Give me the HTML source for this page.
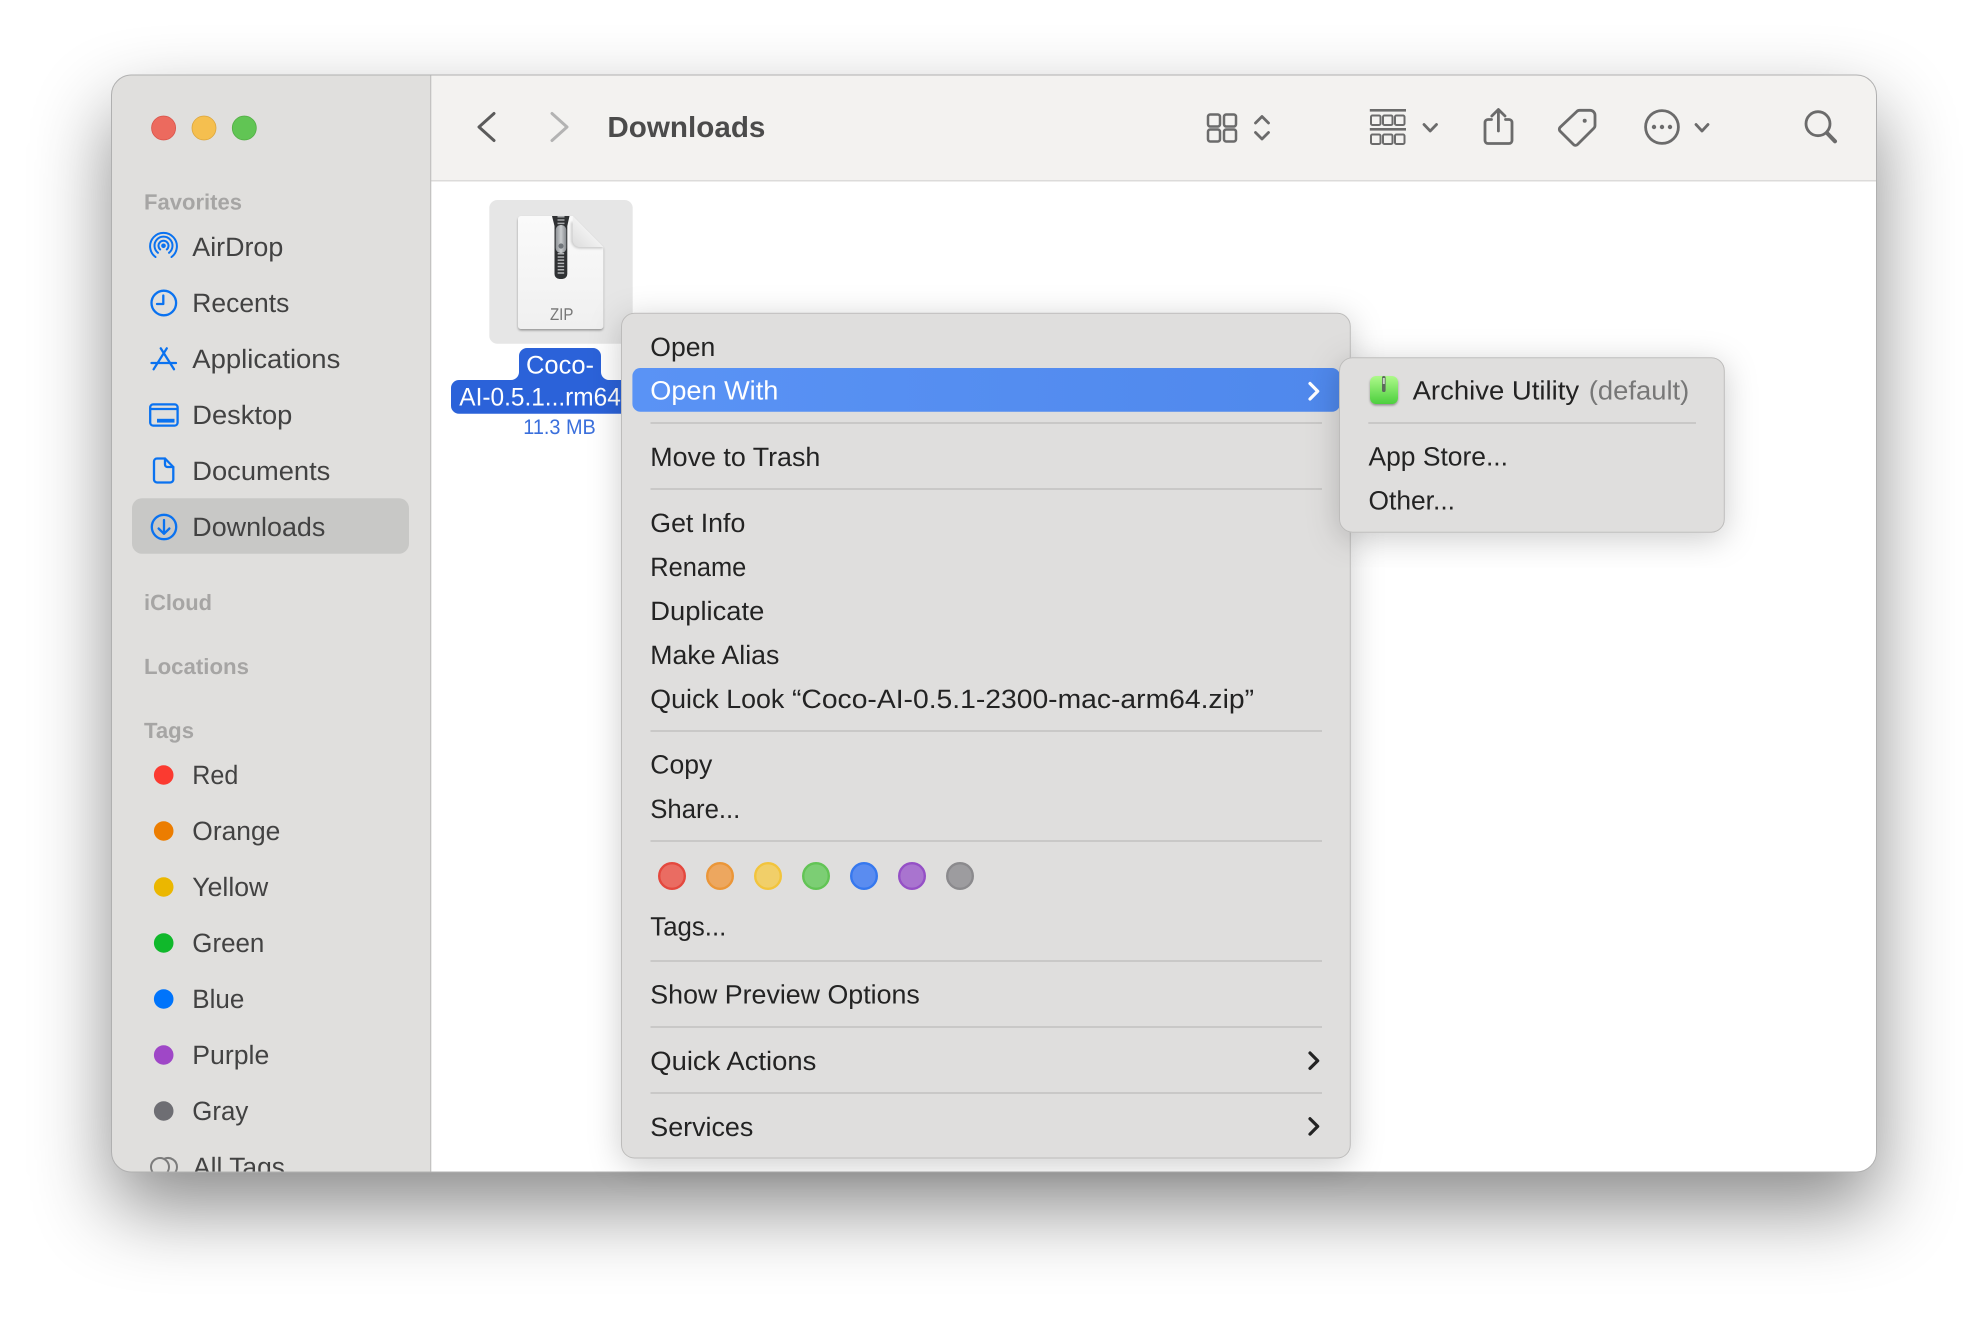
<!DOCTYPE html>
<html><head><meta charset="utf-8"><title>Downloads</title>
<style>
html,body{margin:0;padding:0;background:#fff;width:1988px;height:1320px;overflow:hidden}
#sh{position:absolute;left:111.5px;top:75px;width:1765px;height:1097px;border-radius:20px;box-shadow:0 36px 78px 0 rgba(0,0,0,.46)}
svg{position:absolute;left:0;top:0}
text{font-family:"Liberation Sans",sans-serif;text-rendering:geometricPrecision}
.s{font-size:26.5px;fill:#424242}
.h{font-size:22px;font-weight:700;fill:#a6a5a4}
.m{font-size:26.5px;fill:#232323}
.ic{fill:none;stroke:#0a72f0;stroke-width:2.6;stroke-linecap:round;stroke-linejoin:round}
.tb{fill:none;stroke:#6b6b6b;stroke-width:2.8;stroke-linecap:round;stroke-linejoin:round}
.ch{fill:none;stroke:#232323;stroke-width:3.2;stroke-linecap:round;stroke-linejoin:round}
.sep{fill:#c9c8c7}
</style></head>
<body>
<div id="sh"></div>
<svg width="1988" height="1320" viewBox="0 0 1988 1320" xmlns="http://www.w3.org/2000/svg">
<defs>
<clipPath id="win"><rect x="111.5" y="75" width="1765" height="1097" rx="20"/></clipPath>
<clipPath id="docc"><path d="M521 216H572.7L603.3 247V326a3 3 0 0 1-3 3H521a3 3 0 0 1-3-3V219a3 3 0 0 1 3-3z"/></clipPath>
<linearGradient id="doc" x1="0" y1="0" x2="0" y2="1"><stop offset="0" stop-color="#fafafa"/><stop offset="1" stop-color="#f0f0f0"/></linearGradient>
<linearGradient id="fold" x1="0" y1="1" x2="1" y2="0"><stop offset="0" stop-color="#dcdcdc"/><stop offset=".6" stop-color="#f5f5f5"/><stop offset="1" stop-color="#fbfbfb"/></linearGradient>
<linearGradient id="pull" x1="0" y1="0" x2="1" y2="0"><stop offset="0" stop-color="#8f9397"/><stop offset=".5" stop-color="#c9ccce"/><stop offset="1" stop-color="#85898d"/></linearGradient>
<linearGradient id="sel" x1="0" y1="0" x2="1" y2="0"><stop offset="0" stop-color="#5a93f5"/><stop offset="1" stop-color="#4f88ec"/></linearGradient>
<linearGradient id="au" x1="0" y1="0" x2="0" y2="1"><stop offset="0" stop-color="#aef98a"/><stop offset="1" stop-color="#4ccf3e"/></linearGradient>
<filter id="ms" x="-20%" y="-20%" width="140%" height="140%"><feDropShadow dx="0" dy="6" stdDeviation="16" flood-color="#000" flood-opacity=".2"/></filter>
<filter id="ds" x="-20%" y="-20%" width="140%" height="140%"><feDropShadow dx="0" dy="1.5" stdDeviation="1" flood-color="#000" flood-opacity=".35"/></filter>
<filter id="bl" x="-20%" y="-20%" width="140%" height="140%"><feGaussianBlur stdDeviation="1.2"/></filter>
</defs>

<g clip-path="url(#win)">
<rect x="111.5" y="75" width="1765" height="1097" fill="#fff"/>
<rect x="431" y="75" width="1445" height="105" fill="#f3f2f0"/>
<rect x="431" y="180" width="1445" height="1.5" fill="#dcdbda"/>
<rect x="111.5" y="75" width="319.5" height="1097" fill="#e0dfdd"/>
<rect x="430" y="75" width="1.3" height="1097" fill="#c4c3c2"/>

<!-- traffic lights -->
<circle cx="163.6" cy="128" r="12" fill="#ec6a5e" stroke="#d9534a" stroke-width=".8"/>
<circle cx="204" cy="128" r="12" fill="#f5bf4f" stroke="#dca63c" stroke-width=".8"/>
<circle cx="244.3" cy="128" r="12" fill="#61c554" stroke="#52ad44" stroke-width=".8"/>

<!-- sidebar -->
<text x="144" y="209.6" class="h" textLength="98" lengthAdjust="spacingAndGlyphs">Favorites</text>
<rect x="132" y="498.3" width="277" height="55.4" rx="10" fill="#c8c8c6"/>

<text x="192.3" y="256" class="s" textLength="91" lengthAdjust="spacingAndGlyphs">AirDrop</text>
<text x="192.3" y="312" class="s" textLength="97" lengthAdjust="spacingAndGlyphs">Recents</text>
<text x="192.3" y="368" class="s" textLength="148" lengthAdjust="spacingAndGlyphs">Applications</text>
<text x="192.3" y="424" class="s" textLength="100" lengthAdjust="spacingAndGlyphs">Desktop</text>
<text x="192.3" y="480" class="s" textLength="138" lengthAdjust="spacingAndGlyphs">Documents</text>
<text x="192.3" y="536" class="s" textLength="133" lengthAdjust="spacingAndGlyphs">Downloads</text>

<text x="144" y="610" class="h" textLength="68" lengthAdjust="spacingAndGlyphs">iCloud</text>
<text x="144" y="674" class="h" textLength="105" lengthAdjust="spacingAndGlyphs">Locations</text>
<text x="144" y="738" class="h" textLength="50" lengthAdjust="spacingAndGlyphs">Tags</text>

<text x="192.3" y="784" class="s" textLength="46" lengthAdjust="spacingAndGlyphs">Red</text>
<text x="192.3" y="840" class="s" textLength="88" lengthAdjust="spacingAndGlyphs">Orange</text>
<text x="192.3" y="896" class="s" textLength="76" lengthAdjust="spacingAndGlyphs">Yellow</text>
<text x="192.3" y="952" class="s" textLength="72" lengthAdjust="spacingAndGlyphs">Green</text>
<text x="192.3" y="1008" class="s" textLength="52" lengthAdjust="spacingAndGlyphs">Blue</text>
<text x="192.3" y="1064" class="s" textLength="77" lengthAdjust="spacingAndGlyphs">Purple</text>
<text x="192.3" y="1120" class="s" textLength="56" lengthAdjust="spacingAndGlyphs">Gray</text>
<text x="193" y="1176" class="s" textLength="92" lengthAdjust="spacingAndGlyphs">All Tags</text>

<circle cx="163.7" cy="775" r="9.8" fill="#fb3a30"/>
<circle cx="163.7" cy="831" r="9.8" fill="#ec7d00"/>
<circle cx="163.7" cy="887" r="9.8" fill="#ebb700"/>
<circle cx="163.7" cy="943" r="9.8" fill="#10b82b"/>
<circle cx="163.7" cy="999" r="9.8" fill="#0074fb"/>
<circle cx="163.7" cy="1055" r="9.8" fill="#9f47c7"/>
<circle cx="163.7" cy="1111" r="9.8" fill="#6e6e73"/>
<g fill="none" stroke="#7c7c7c" stroke-width="2"><path d="M164.5 1158.7A9 9 0 1 1 164.5 1175.3"/><circle cx="160" cy="1167" r="9"/></g>

<!-- sidebar icons -->
<g class="ic" style="stroke-width:2">
<path d="M155.5 257A13.4 13.4 0 1 1 171.5 257"/>
<path d="M158 252.8A9 9 0 1 1 169 252.8"/>
<path d="M160.2 249.5A5 5 0 1 1 166.8 249.5"/>
</g>
<circle cx="163.5" cy="245.8" r="2.3" fill="#0a72f0"/>
<g class="ic" style="stroke-width:2.3">
<circle cx="163.8" cy="303" r="12.3"/>
<path d="M163.3 295.5V304H157"/>
<path d="M160.7 348.3L174 369.3M166.8 348.3L153.6 369.3M151.5 363H176"/>
<rect x="150.2" y="404.4" width="27.4" height="21.2" rx="3"/>
<path d="M150.5 409H177.5"/>
<path d="M157 458.5H165L173.3 467V479.5a3 3 0 0 1-3 3H157a3 3 0 0 1-3-3V461.5a3 3 0 0 1 3-3z"/>
<path d="M165 458.5V464.5a2.5 2.5 0 0 0 2.5 2.5H173.3"/>
<circle cx="164" cy="527" r="12.2"/>
<path d="M164 520V533.5M158.6 528.5L164 533.8L169.4 528.5"/>
</g>
<rect x="157" y="418.8" width="17.5" height="3.8" fill="#0a72f0"/>

<!-- toolbar -->
<path d="M494 113.5L479 127L494 140.5" fill="none" stroke="#5b5b5b" stroke-width="3" stroke-linecap="round" stroke-linejoin="round"/>
<path d="M552 113.5L567 127L552 140.5" fill="none" stroke="#b3b3b3" stroke-width="3" stroke-linecap="round" stroke-linejoin="round"/>
<text x="607.4" y="137" style="font-size:29px;font-weight:700;fill:#4b4b4b" textLength="158" lengthAdjust="spacingAndGlyphs">Downloads</text>

<g class="tb" style="stroke-width:2.5">
<rect x="1208" y="114.5" width="12" height="12" rx="2.2"/><rect x="1224" y="114.5" width="12" height="12" rx="2.2"/>
<rect x="1208" y="129.5" width="12" height="12" rx="2.2"/><rect x="1224" y="129.5" width="12" height="12" rx="2.2"/>
</g>
<path class="tb" d="M1255.5 123L1262 116.5L1268.5 123M1255.5 132.5L1262 139L1268.5 132.5"/>

<g fill="#6b6b6b">
<rect x="1369.8" y="109" width="36.2" height="2.6"/><rect x="1369.8" y="128" width="36.2" height="2.6"/>
</g>
<g fill="none" stroke="#6b6b6b" stroke-width="2">
<rect x="1371" y="115.5" width="9.5" height="9.5" rx="1.4"/><rect x="1383" y="115.5" width="9.5" height="9.5" rx="1.4"/><rect x="1395" y="115.5" width="9.5" height="9.5" rx="1.4"/>
<rect x="1371" y="134.5" width="9.5" height="9.5" rx="1.4"/><rect x="1383" y="134.5" width="9.5" height="9.5" rx="1.4"/><rect x="1395" y="134.5" width="9.5" height="9.5" rx="1.4"/>
</g>
<path class="tb" d="M1424 124.5L1430.2 131L1436.5 124.5"/>

<g class="tb">
<path d="M1491.5 119.5H1488a3 3 0 0 0-3 3V140.5a3 3 0 0 0 3 3H1509a3 3 0 0 0 3-3V122.5a3 3 0 0 0-3-3H1505.5"/>
<path d="M1498.4 131V109.5M1491.8 116L1498.4 109.5L1505 116"/>
<path d="M1560.2 127.2L1576.8 111.5a4 4 0 0 1 2.8-1.2H1590a5 5 0 0 1 5 5V125.5a4 4 0 0 1-1.2 2.8L1577.5 144.5a2.8 2.8 0 0 1-4 0L1560.2 131.3a2.8 2.8 0 0 1 0-4.1z"/>
<circle cx="1662" cy="127" r="16.4"/>
<path d="M1696 124.5L1702 131L1708 124.5"/>
<circle cx="1818" cy="123.7" r="12"/>
<path d="M1827 133L1835 141.3" style="stroke-width:4"/>
</g>
<circle cx="1584.7" cy="120.7" r="2" fill="#6b6b6b"/>
<circle cx="1654" cy="127" r="2.2" fill="#6b6b6b"/><circle cx="1662" cy="127" r="2.2" fill="#6b6b6b"/><circle cx="1670" cy="127" r="2.2" fill="#6b6b6b"/>

<!-- file -->
<rect x="489.3" y="200" width="143.4" height="143.7" rx="8" fill="#e6e6e6"/>
<path filter="url(#ds)" d="M521 216H572.7L603.3 247V326a3 3 0 0 1-3 3H521a3 3 0 0 1-3-3V219a3 3 0 0 1 3-3z" fill="url(#doc)"/>
<g clip-path="url(#docc)">
<path d="M572.5 222V240a7 7 0 0 0 7 7H603" fill="none" stroke="#bdbdbd" stroke-width="2.4" filter="url(#bl)"/>
</g>
<path d="M572.7 216V240a7 7 0 0 0 7 7H603.3z" fill="url(#fold)"/>
<g clip-path="url(#docc)">
<path d="M552 216H569.5L567.3 226V274a5 5 0 0 1-5 5H559.5a5 5 0 0 1-5-5V226z" fill="#2f3133"/>
<path d="M561 216V226" stroke="#a8aaac" stroke-width="7" stroke-dasharray="1.5 1.8" fill="none"/>
<path d="M560.9 253V275" stroke="#b2b4b6" stroke-width="6.5" stroke-dasharray="1.5 1.7" fill="none"/>
<rect x="555.7" y="225" width="10.6" height="28" rx="5" fill="url(#pull)"/>
<circle cx="561" cy="246" r="2.6" fill="#70757a"/>
</g>
<text x="550" y="320" style="font-size:17px;fill:#777" textLength="23.4" lengthAdjust="spacingAndGlyphs">ZIP</text>

<!-- name -->
<path fill="#2b62d9" d="M527 348H593a8 8 0 0 1 8 8V372a8 8 0 0 0 8 8H640V405.7a8 8 0 0 1-8 8H459a8 8 0 0 1-8-8V388a8 8 0 0 1 8-8H511a8 8 0 0 0 8-8V356a8 8 0 0 1 8-8z"/>
<text x="526" y="373.7" style="font-size:25.5px;fill:#fff" textLength="68" lengthAdjust="spacingAndGlyphs">Coco-</text>
<text x="459.3" y="405.5" style="font-size:25.5px;fill:#fff" textLength="161.5" lengthAdjust="spacingAndGlyphs">AI-0.5.1...rm64</text>
<text x="523.3" y="434" style="font-size:21px;fill:#3a6fdc" textLength="72.5" lengthAdjust="spacingAndGlyphs">11.3 MB</text>
</g>
<rect x="111.5" y="75" width="1765" height="1097" rx="20" fill="none" stroke="#b0b0b0" stroke-width="1"/>

<!-- context menu -->
<rect x="621.5" y="313.3" width="728.8" height="844.7" rx="13" fill="#dfdedd" stroke="#bdbcbb" stroke-width="1" filter="url(#ms)"/>
<rect x="632.4" y="368" width="707.6" height="43.7" rx="8" fill="url(#sel)"/>

<text x="650.3" y="355.8" class="m" textLength="65" lengthAdjust="spacingAndGlyphs">Open</text>
<text x="650.3" y="399.3" class="m" style="fill:#fff" textLength="128" lengthAdjust="spacingAndGlyphs">Open With</text>
<path d="M1310 383.5L1317.7 391.2L1310 399" fill="none" stroke="#fff" stroke-width="3.2" stroke-linecap="round" stroke-linejoin="round"/>
<rect class="sep" x="650.5" y="422" width="671.5" height="2"/>
<text x="650.3" y="466" class="m" textLength="170" lengthAdjust="spacingAndGlyphs">Move to Trash</text>
<rect class="sep" x="650.5" y="488" width="671.5" height="2"/>
<text x="650.3" y="531.8" class="m" textLength="95" lengthAdjust="spacingAndGlyphs">Get Info</text>
<text x="650.3" y="575.8" class="m" textLength="96" lengthAdjust="spacingAndGlyphs">Rename</text>
<text x="650.3" y="620" class="m" textLength="114" lengthAdjust="spacingAndGlyphs">Duplicate</text>
<text x="650.3" y="664" class="m" textLength="129" lengthAdjust="spacingAndGlyphs">Make Alias</text>
<text x="650.3" y="707.8" class="m" textLength="134" lengthAdjust="spacingAndGlyphs">Quick Look</text>
<text x="792" y="707.8" class="m" textLength="462" lengthAdjust="spacingAndGlyphs">“Coco-AI-0.5.1-2300-mac-arm64.zip”</text>
<rect class="sep" x="650.5" y="730" width="671.5" height="2"/>
<text x="650.3" y="773.6" class="m" textLength="62" lengthAdjust="spacingAndGlyphs">Copy</text>
<text x="650.3" y="818" class="m" textLength="90" lengthAdjust="spacingAndGlyphs">Share...</text>
<rect class="sep" x="650.5" y="840" width="671.5" height="2"/>
<g stroke-width="2.4">
<circle cx="672" cy="876" r="12.8" fill="#ea6c62" stroke="#e4483e"/>
<circle cx="720" cy="876" r="12.8" fill="#eda75f" stroke="#eb9638"/>
<circle cx="768" cy="876" r="12.8" fill="#f1cf69" stroke="#f2c43c"/>
<circle cx="816" cy="876" r="12.8" fill="#7cce74" stroke="#62c455"/>
<circle cx="864" cy="876" r="12.8" fill="#5a8cf0" stroke="#3678ee"/>
<circle cx="912" cy="876" r="12.8" fill="#a974cf" stroke="#9550c6"/>
<circle cx="960" cy="876" r="12.8" fill="#9d9c9f" stroke="#8b8a8d"/>
</g>
<text x="650.3" y="935.7" class="m" textLength="76" lengthAdjust="spacingAndGlyphs">Tags...</text>
<rect class="sep" x="650.5" y="960" width="671.5" height="2"/>
<text x="650.3" y="1003.3" class="m" textLength="269.5" lengthAdjust="spacingAndGlyphs">Show Preview Options</text>
<rect class="sep" x="650.5" y="1026" width="671.5" height="2"/>
<text x="650.3" y="1070" class="m" textLength="166" lengthAdjust="spacingAndGlyphs">Quick Actions</text>
<path class="ch" d="M1310 1053L1317.7 1060.7L1310 1068.4"/>
<rect class="sep" x="650.5" y="1092" width="671.5" height="2"/>
<text x="650.3" y="1136" class="m" textLength="103" lengthAdjust="spacingAndGlyphs">Services</text>
<path class="ch" d="M1310 1118.7L1317.7 1126.4L1310 1134.1"/>

<!-- submenu -->
<rect x="1339.5" y="357.7" width="384.8" height="174.5" rx="13" fill="#dfdedd" stroke="#bdbcbb" stroke-width="1" filter="url(#ms)"/>
<rect x="1370" y="376" width="28" height="28" rx="6" fill="url(#au)" filter="url(#ds)"/>
<rect x="1382" y="376" width="3.6" height="16" rx="1.8" fill="#5c6b5c"/>
<rect x="1382.8" y="378" width="2" height="6" fill="#c8d0c8"/>
<text x="1412.6" y="399.3" class="m" textLength="166.5" lengthAdjust="spacingAndGlyphs">Archive Utility</text>
<text x="1588.8" y="399.3" class="m" style="fill:#777" textLength="100.5" lengthAdjust="spacingAndGlyphs">(default)</text>
<rect class="sep" x="1368.3" y="422" width="327.7" height="2"/>
<text x="1368.5" y="465.7" class="m" textLength="139.5" lengthAdjust="spacingAndGlyphs">App Store...</text>
<text x="1368.5" y="509.3" class="m" textLength="86.5" lengthAdjust="spacingAndGlyphs">Other...</text>
</svg>
</body></html>
